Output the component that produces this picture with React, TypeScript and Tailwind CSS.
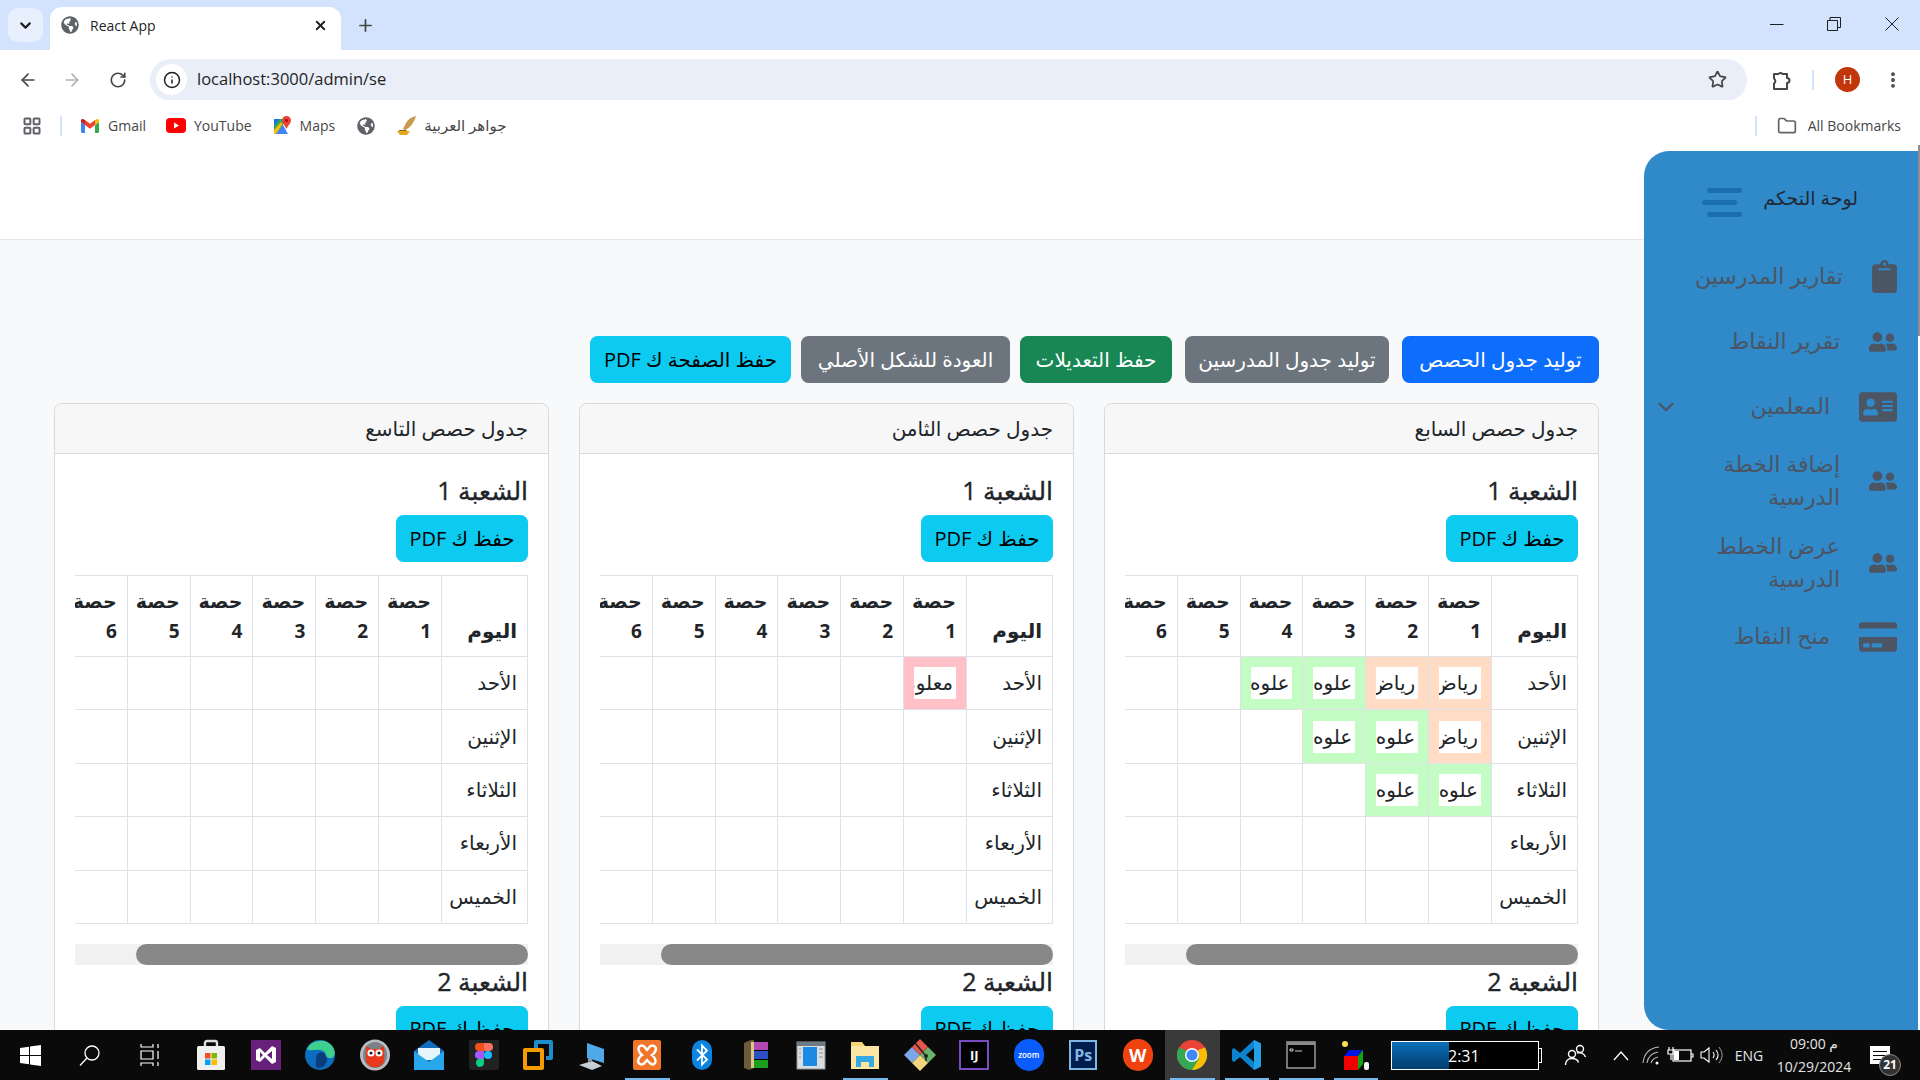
import React from 'react';
import { FaAddressCard, FaClipboard, FaCreditCard, FaGlobeAmericas, FaUserFriends } from 'react-icons/fa';
import { ArrowLeft, ArrowRight, ChevronDown, EllipsisVertical, Folder, Info, LayoutGrid, Plus, RotateCw, Star, X } from 'lucide-react';

const uiFont = "font-['Open_Sans','DejaVu_Sans',sans-serif]";

type Cell = { text: string; tone: 'green' | 'peach' | 'pink' };

const days = ['الأحد', 'الإثنين', 'الثلاثاء', 'الأربعاء', 'الخميس'];
const periods = [1, 2, 3, 4, 5, 6, 7];

const green = (text = 'علوه'): Cell => ({ text, tone: 'green' });
const peach = (text = 'رياض'): Cell => ({ text, tone: 'peach' });

const grades: { title: string; cells: Record<string, Cell> }[] = [
  {
    title: 'جدول حصص السابع',
    cells: {
      '0-0': peach(),
      '0-1': peach(),
      '0-2': green(),
      '0-3': green(),
      '1-0': peach(),
      '1-1': green(),
      '1-2': green(),
      '2-0': green(),
      '2-1': green(),
    },
  },
  { title: 'جدول حصص الثامن', cells: { '0-0': { text: 'معلومات', tone: 'pink' } } },
  { title: 'جدول حصص التاسع', cells: {} },
];

const toneClass = {
  green: 'bg-[#c3fdc3]',
  peach: 'bg-[#ffdcc3]',
  pink: 'bg-[#ffc0c8]',
};

const ScheduleTable = ({ cells }: { cells: Record<string, Cell> }) => (
  <div>
    <div className="overflow-hidden">
      <table className="mb-[20px] w-[527px] table-fixed border-collapse text-[20px] text-[#212529]">
        <thead>
          <tr className="h-[81px]">
            <th className="w-[86px] border border-[#dee2e6] p-[10px] align-bottom text-right leading-[30px] font-bold">اليوم</th>
            {periods.map((p) => (
              <th key={p} className="border border-[#dee2e6] px-[10px] py-[10px] align-bottom text-right text-[19px] leading-[30px] font-bold">
                حصة {p}
              </th>
            ))}
          </tr>
        </thead>
        <tbody>
          {days.map((day, d) => (
            <tr key={day} className="h-[53.4px]">
              <td className="border border-[#dee2e6] p-[10px] text-right whitespace-nowrap">{day}</td>
              {periods.map((p, i) => {
                const cell = cells[`${d}-${i}`];
                return (
                  <td key={p} className={`border border-[#dee2e6] p-[10px] ${cell ? toneClass[cell.tone] : ''}`}>
                    {cell && (
                      <div className="h-[32px] overflow-hidden bg-white pr-[3px] text-right leading-[32px] whitespace-nowrap">{cell.text}</div>
                    )}
                  </td>
                );
              })}
            </tr>
          ))}
        </tbody>
      </table>
    </div>
    {/* scrollbar */}
    <div className="h-[21px] bg-[#f1f1f1]">
      <div className="h-full w-[392px] rounded-[11px] bg-[#888888]" />
    </div>
  </div>
);

const Section = ({ n, cells }: { n: number; cells: Record<string, Cell> }) => (
  <div>
    <h4 className="mb-[9px] text-[25px] leading-[32px] font-normal text-[#212529] [-webkit-text-stroke:0.35px_#212529]">الشعبة {n}</h4>
    <button className="mb-[13px] block h-[47px] w-[132px] rounded-[7.5px] bg-[#0dcaf0] text-[20px] text-black">حفظ ك PDF</button>
    <ScheduleTable cells={cells} />
  </div>
);

const topButtons = [
  { label: 'توليد جدول الحصص', cls: 'w-[197px] bg-[#0d6efd] text-white ml-[13px]' },
  { label: 'توليد جدول المدرسين', cls: 'w-[204px] bg-[#6c757d] text-white ml-[13px]' },
  { label: 'حفظ التعديلات', cls: 'w-[152px] bg-[#198754] text-white ml-[10px]' },
  { label: 'العودة للشكل الأصلي', cls: 'w-[209px] bg-[#6c757d] text-white ml-[10px]' },
  { label: 'حفظ الصفحة ك PDF', cls: 'w-[201px] bg-[#0dcaf0] text-black' },
];

const sideItems = [
  { label: 'تقارير المدرسين', icon: <FaClipboard className="h-[33px] w-[25px]" />, h: 'h-[65px]' },
  { label: 'تقرير النقاط', icon: <FaUserFriends size={28} />, h: 'h-[65px]' },
  { label: 'المعلمين', icon: <FaAddressCard size={38} />, h: 'h-[65px]', chevron: true },
  { label: 'إضافة الخطة الدرسية', icon: <FaUserFriends size={28} />, h: 'h-[84px]' },
  { label: 'عرض الخطط الدرسية', icon: <FaUserFriends size={28} />, h: 'h-[80px]' },
  { label: 'منح النقاط', icon: <FaCreditCard size={38} />, h: 'h-[68px]' },
];

const Sidebar = () => (
  <aside dir="rtl" className="relative z-10 -mt-[89px] flex w-[274px] shrink-0 flex-col rounded-l-[25px] bg-[#3089c9] text-[22px] leading-[32.5px] text-[#4b5563]">
    <div className="flex h-[93px] items-center gap-[21px] pr-[60px]">
      <span className="pt-[2px] text-[19px] text-[#1f2937]">لوحة التحكم</span>
      <span className="mt-[10px] flex w-[40px] flex-col gap-[7px]">
        <i className="ml-[5px] block h-[5px] w-[35px] rounded-full bg-[#1c6fae]" />
        <i className="block h-[5px] w-[35px] self-end rounded-full bg-[#1c6fae]" />
        <i className="ml-[5px] block h-[5px] w-[35px] rounded-full bg-[#1c6fae]" />
      </span>
    </div>
    {sideItems.map((item) => (
      <div key={item.label} className={`flex shrink-0 items-center gap-[29px] pr-[21px] pl-[9px] ${item.h}`}>
        <span className="flex shrink-0 items-center">{item.icon}</span>
        <span className="max-w-[150px] pb-[3px] text-right">{item.label}</span>
        {item.chevron && <ChevronDown size={26} strokeWidth={2.2} className="mr-auto" />}
      </div>
    ))}
  </aside>
);

const GmailIcon = () => (
  <svg width="18" height="14" viewBox="0 0 18 14">
    <path d="M0 3v9.500A1.500 1.500 0 0 0 1.500 14H4V6z" fill="#4285f4" />
    <path d="M14 14h2.500A1.500 1.500 0 0 0 18 12.500V3l-4 3z" fill="#34a853" />
    <path d="M14 1v5l4-3V1.500C18 .2 16.500-.5 15.500.3z" fill="#fbbc04" />
    <path d="M4 6V1l5 3.800L14 1v5l-5 3.700z" fill="#ea4335" />
    <path d="M0 1.500V3l4 3V1L2.500.3C1.500-.5 0 .2 0 1.500z" fill="#c5221f" />
  </svg>
);

const YoutubeIcon = () => (
  <svg width="20" height="15" viewBox="0 0 20 15">
    <rect width="20" height="15" rx="4" fill="#ff0000" />
    <path d="M8 4.500v6l5-3z" fill="#fff" />
  </svg>
);

const MapsIcon = () => (
  <svg width="18" height="19" viewBox="0 0 18 19">
    <path d="M1 3h9v15H1z" fill="#34a853" />
    <path d="M1 18 10 9l5 9z" fill="#4285f4" />
    <path d="M1 3h6L1 10z" fill="#1a73e8" />
    <path d="M1 14 8 6l1.500 2L3 18H1z" fill="#fbbc04" />
    <path d="M13.500 0a4.500 4.500 0 0 1 4.500 4.500c0 3-3 5-4.500 8.500C12 9.500 9 7.500 9 4.500A4.500 4.500 0 0 1 13.500 0z" fill="#ea4335" />
    <circle cx="13.500" cy="4.500" r="1.600" fill="#a50e0e" />
  </svg>
);

const QuillIcon = () => (
  <svg width="21" height="20" viewBox="0 0 21 20">
    <path d="M20 0c-5 1-9 4-11 9l-2 4 2 1c5-2 9-7 11-14z" fill="#c99a4b" />
    <path d="M1 15h13l-3 4H4z" fill="#e2a91f" />
    <path d="M3 14h8l-1 1H3z" fill="#8a6414" />
  </svg>
);

const ExtensionIcon = () => (
  <svg width="22" height="22" viewBox="0 0 22 22" fill="none" stroke="#444746" strokeWidth="2" className="ml-[23px]">
    <path d="M4 5h4.500a2.500 2.500 0 0 1 4 0H17v4a2.500 2.500 0 0 1 0 5v6H4v-5.500a3 3 0 0 0 0-5z" strokeLinejoin="round" />
  </svg>
);

const TabStrip = () => (
  <div className="flex h-[50px] items-end bg-[#d3e3fd]">
    <div className="mb-[8px] ml-[8px] flex h-[34px] w-[35px] items-center justify-center rounded-[10px] bg-[#e9f0fd]">
      <ChevronDown size={17} strokeWidth={3} className="text-[#1f1f1f]" />
    </div>
    <div className="ml-[7px] flex h-[43px] w-[291px] items-center rounded-t-[12px] bg-white pr-[13px] pb-[7px] pl-[11px]">
      <FaGlobeAmericas size={18} className="text-[#5f6368]" />
      <span className={`ml-[11px] flex-1 text-[14px] text-[#1f1f1f] ${uiFont}`}>React App</span>
      <X size={15} strokeWidth={3} className="text-[#1f1f1f]" />
    </div>
    <div className="mb-[8px] ml-[15px] flex h-[34px] items-center">
      <Plus size={19} strokeWidth={2.2} className="text-[#444746]" />
    </div>
    <div className="ml-auto flex h-full items-start pt-[17px] text-[#1f1f1f]">
      <svg width="14" height="14" viewBox="0 0 14 14" className="mr-[43px]"><path d="M0 7.500h13.500" stroke="currentColor" fill="none" /></svg>
      <svg width="14" height="14" viewBox="0 0 14 14" className="mr-[44px]"><path d="M.5 3.500h10v10H.5zM3 3.500V.5h10.500v10h-3" stroke="currentColor" fill="none" /></svg>
      <svg width="14" height="14" viewBox="0 0 14 14" className="mr-[21px]"><path d="M.5.500l13 13M13.500.500l-13 13" stroke="currentColor" fill="none" /></svg>
    </div>
  </div>
);

const Toolbar = () => (
  <div className="flex h-[50px] items-center rounded-t-[10px] bg-white pt-[9px]">
    <div className="flex w-[150px] items-center text-[#444746]">
      <ArrowLeft size={20} strokeWidth={2} className="ml-[18px]" />
      <ArrowRight size={20} strokeWidth={2} className="ml-[24px] text-[#b0b1b2]" />
      <RotateCw size={18} strokeWidth={2.2} className="ml-[27px]" />
    </div>
    <div className="flex h-[42px] w-[1597px] items-center rounded-full bg-[#e9eef8] pr-[20px] pl-[6px]">
      <span className="flex h-[31px] w-[31px] items-center justify-center rounded-full bg-white">
        <Info size={18} strokeWidth={2} className="text-[#1f1f1f]" />
      </span>
      <span className={`ml-[10px] flex-1 text-[16.5px] text-[#1f1f1f] ${uiFont}`}>localhost:3000/admin/se</span>
      <Star size={19} strokeWidth={2.2} className="text-[#444746]" />
    </div>
    <ExtensionIcon />
    <span className="ml-[20px] h-[20px] w-[2px] bg-[#d3e3fd]" />
    <span className={`ml-[21px] flex h-[25px] w-[25px] items-center justify-center rounded-full bg-[#c1360b] text-[13px] text-white ${uiFont}`}>H</span>
    <EllipsisVertical size={20} strokeWidth={2.6} className="ml-[23px] text-[#444746]" />
  </div>
);

const BookmarkBar = () => (
  <div className={`flex h-[45px] items-center bg-white pt-[6px] text-[14px] text-[#474747] ${uiFont}`}>
    <LayoutGrid size={20} strokeWidth={2.4} className="ml-[22px] text-[#5f6368]" />
    <span className="mr-[19px] ml-[18px] h-[20px] w-[2px] bg-[#d3e3fd]" />
    <GmailIcon />
    <span className="ml-[9px]">Gmail</span>
    <span className="ml-[20px]"><YoutubeIcon /></span>
    <span className="ml-[8px]">YouTube</span>
    <span className="ml-[21px]"><MapsIcon /></span>
    <span className="ml-[9px]">Maps</span>
    <FaGlobeAmericas size={18} className="ml-[22px] text-[#5f6368]" />
    <span className="ml-[21px]"><QuillIcon /></span>
    <span className="ml-[7px] text-[15px]">جواهر العربية</span>
    <span className="ml-auto h-[20px] w-[2px] bg-[#d3e3fd]" />
    <Folder size={20} strokeWidth={2} className="ml-[20px] text-[#5f6368]" />
    <span className="mr-[19px] ml-[11px] text-[14px]">All Bookmarks</span>
  </div>
);

const Ic = ({ children }: { children: React.ReactNode }) => (
  <svg width="32" height="32" viewBox="0 0 32 32">{children}</svg>
);

const TextTile = ({ className, children }: { className: string; children: React.ReactNode }) => (
  <span className={`flex items-center justify-center ${uiFont} ${className}`}>{children}</span>
);

const dockIcons: { key: string; node: React.ReactNode; open?: boolean; active?: boolean }[] = [
  {
    key: 'store',
    node: (
      <Ic>
        <path d="M10 7V4a2 2 0 0 1 2-2h8a2 2 0 0 1 2 2v3" stroke="#ddd" strokeWidth="2.400" fill="none" />
        <rect x="2" y="7" width="28" height="24" rx="1.500" fill="#f0f0f0" />
        <rect x="10" y="14" width="5.500" height="5.500" fill="#f25022" />
        <rect x="16.500" y="14" width="5.500" height="5.500" fill="#7fba00" />
        <rect x="10" y="20.500" width="5.500" height="5.500" fill="#00a4ef" />
        <rect x="16.500" y="20.500" width="5.500" height="5.500" fill="#ffb900" />
      </Ic>
    ),
  },
  {
    key: 'vs',
    node: (
      <Ic>
        <rect x="1" y="1" width="30" height="30" fill="#68217a" />
        <path d="M6 11l4-2 5 5 7-7 4 2v14l-4 2-7-7-5 5-4-2zM10 13v6l3-3zM22 12l-5 4 5 4z" fill="#fff" fillRule="evenodd" />
      </Ic>
    ),
  },
  {
    key: 'edge',
    node: (
      <Ic>
        <circle cx="16" cy="16" r="15" fill="#0c6dbf" />
        <path d="M3 10C7 0 25-2 30 10c2 5 0 10-5 9-4-1-2-5-6-7-6-3-13 1-16-2z" fill="#3ecf8e" />
        <path d="M12 20c0-5 4-8 8-6 2 1 0 3 3 5 1 3-3 11-9 10-3-1-2-5-2-9z" fill="#0a3d7d" />
      </Ic>
    ),
  },
  {
    key: 'owl',
    node: (
      <Ic>
        <ellipse cx="16" cy="16" rx="15" ry="15.500" fill="#b9bdc2" />
        <ellipse cx="16" cy="16" rx="12" ry="13" fill="#7c8187" />
        <path d="M7 7l5 3h8l5-3v16l-5 5h-8l-5-5z" fill="#e8391d" />
        <circle cx="12" cy="14" r="3.500" fill="#fff" />
        <circle cx="20" cy="14" r="3.500" fill="#fff" />
        <circle cx="12" cy="14" r="1.600" fill="#222" />
        <circle cx="20" cy="14" r="1.600" fill="#222" />
      </Ic>
    ),
  },
  {
    key: 'mail',
    node: (
      <Ic>
        <path d="M1 12 16 1l15 11v19H1z" fill="#0f6cbd" />
        <path d="M5 9h22v12H5z" fill="#e8f4fc" />
        <path d="M1 12l15 11 15-11v19H1z" fill="#28a8ea" />
      </Ic>
    ),
  },
  {
    key: 'figma',
    node: (
      <Ic>
        <rect x="1" y="1" width="30" height="30" rx="2" fill="#222222" />
        <path d="M11 4h5v8h-5a4 4 0 0 1 0-8z" fill="#f24e1e" />
        <path d="M16 4h5a4 4 0 0 1 0 8h-5z" fill="#ff7262" />
        <path d="M11 12h5v8h-5a4 4 0 0 1 0-8z" fill="#a259ff" />
        <circle cx="20" cy="16" r="4" fill="#1abcfe" />
        <path d="M11 20h5v4a4 4 0 1 1-5-4z" fill="#0acf83" />
      </Ic>
    ),
  },
  {
    key: 'vmware',
    node: (
      <Ic>
        <path d="M14 1h15a2 2 0 0 1 2 2v16a2 2 0 0 1-2 2h-5v-4h3V5H16v4h-4V3a2 2 0 0 1 2-2z" fill="#1d8ecb" />
        <path d="M3 9h17a2 2 0 0 1 2 2v18a2 2 0 0 1-2 2H3a2 2 0 0 1-2-2V11a2 2 0 0 1 2-2zm2 4v14h13V13z" fill="#f59c00" fillRule="evenodd" />
      </Ic>
    ),
  },
  {
    key: 'pc',
    node: (
      <Ic>
        <path d="M10 4l17 6v14l-17-5z" fill="#4fa8e8" />
        <path d="M2 26l13-4 10 5-10 4z" fill="#c7ced4" />
        <path d="M11 19l4 1v2l-4 1z" fill="#8d99a3" />
      </Ic>
    ),
  },
  {
    key: 'xampp',
    open: true,
    node: (
      <Ic>
        <rect x="2" y="1" width="28" height="30" rx="2" fill="#f1762a" />
        <path d="M9 7c4-2 5 2 7 4 2-2 3-6 7-4s1 7-2 9c3 2 5 7 2 9s-5-2-7-4c-2 2-3 6-7 4s-1-7 2-9c-3-2-5-7-2-9z" fill="none" stroke="#fff" strokeWidth="2.400" />
      </Ic>
    ),
  },
  {
    key: 'bluetooth',
    node: (
      <Ic>
        <rect x="6" y="1" width="20" height="30" rx="10" fill="#0a84e0" />
        <path d="M11 10.500l10 10-5 5v-19l5 5-10 10" fill="none" stroke="#fff" strokeWidth="1.800" />
      </Ic>
    ),
  },
  {
    key: 'rar',
    node: (
      <Ic>
        <rect x="6" y="3" width="22" height="8" fill="#b04ab0" />
        <rect x="6" y="12" width="22" height="8" fill="#2d4fc4" />
        <rect x="6" y="21" width="22" height="8" fill="#1aa01a" />
        <path d="M4 4l7-3h3v28l-5 2-5-2z" fill="#6b5a3c" />
        <rect x="11" y="3" width="3" height="26" fill="#d9c48a" />
      </Ic>
    ),
  },
  {
    key: 'window',
    node: (
      <Ic>
        <rect x="2" y="3" width="28" height="27" fill="#d9dde0" stroke="#8f979d" />
        <rect x="2" y="3" width="28" height="4" fill="#6f7a82" />
        <rect x="8" y="8" width="14" height="19" fill="#1e88e5" />
        <path d="M24 10h4M24 14h4M24 18h4M4 10h2M4 14h2M4 18h2" stroke="#8f979d" />
      </Ic>
    ),
  },
  {
    key: 'files',
    open: true,
    node: (
      <Ic>
        <path d="M2 3h11l3 4h14v23H2z" fill="#f6d57a" />
        <path d="M2 7h28v23H2z" fill="#fbe7a3" />
        <path d="M7 28V17h18v11h-5v-5h-8v5z" fill="#35a9e1" />
      </Ic>
    ),
  },
  {
    key: 'git',
    node: (
      <Ic>
        <path d="M8 8l8 8-8 8-8-8z" fill="#7aa7e8" />
        <path d="M24 8l8 8-8 8-8-8z" fill="#6bb56b" />
        <path d="M16 16l8 8-8 8-8-8z" fill="#f2d57e" />
        <path d="M16 0l8 8-8 8-8-8z" fill="#e2574c" />
        <path d="M11 4l11 13v5" stroke="#222" strokeWidth="1.500" fill="none" />
        <circle cx="22" cy="17" r="2" fill="#222" />
      </Ic>
    ),
  },
  {
    key: 'idea',
    node: (
      <TextTile className="h-[30px] w-[30px] border-2 border-[#7b4bc4] bg-black text-[13px] leading-[13px] font-bold text-white">IJ</TextTile>
    ),
  },
  {
    key: 'zoom',
    node: (
      <TextTile className="h-[32px] w-[30px] rounded-full bg-[#0b5cff] text-[8px] font-semibold text-white">zoom</TextTile>
    ),
  },
  {
    key: 'ps',
    node: (
      <TextTile className="h-[30px] w-[28px] border-2 border-[#7fb6e6] bg-[#001d4d] text-[16px] font-bold text-[#7fb6e6]">Ps</TextTile>
    ),
  },
  {
    key: 'wps',
    node: (
      <TextTile className="h-[32px] w-[30px] rounded-full bg-[#f0420f] text-[18px] font-bold text-white">W</TextTile>
    ),
  },
  {
    key: 'chrome',
    open: true,
    active: true,
    node: (
      <Ic>
        <circle cx="16" cy="16" r="15" fill="#ea4335" />
        <path d="M16 16 3 23.500A15 15 0 0 1 3 8.500L9 11z" fill="#34a853" />
        <path d="M16 31A15 15 0 0 1 3 23.500l7-11 6 3.500 13 -7.500A15 15 0 0 1 16 31z" fill="#34a853" />
        <path d="M29 8.500A15 15 0 0 1 16 31l7-11.500-1-8.500z" fill="#fbbc04" />
        <circle cx="16" cy="16" r="7" fill="#fff" />
        <circle cx="16" cy="16" r="5.500" fill="#4285f4" />
      </Ic>
    ),
  },
  {
    key: 'vscode',
    open: true,
    node: (
      <Ic>
        <path d="M23 1l7 3.500v23L23 31 9 18l-6 5-2-1.500v-11L3 9l6 5z" fill="#0a84d0" />
        <path d="M23 9v14l-8-7z" fill="#0a0a0a" />
        <path d="M23 1l7 3.500v23L23 31z" fill="#24a2e8" />
      </Ic>
    ),
  },
  {
    key: 'terminal',
    open: true,
    node: (
      <Ic>
        <rect x="2" y="3" width="28" height="26" fill="#050505" stroke="#9a9a9a" strokeWidth="1.500" />
        <rect x="2" y="3" width="28" height="3" fill="#8a8a8a" />
        <path d="M5 10h3v2H5zM10 12h7" stroke="#ccc" />
      </Ic>
    ),
  },
  {
    key: 'paint',
    open: true,
    node: (
      <Ic>
        <circle cx="5" cy="5" r="3" fill="#ffe14d" />
        <rect x="4" y="17" width="14" height="14" fill="#f00000" />
        <path d="M4 17l5-6h14l-5 6z" fill="#0015e0" />
        <path d="M18 17l5-6v14l-5 6z" fill="#0fa30f" />
        <rect x="24" y="23" width="5" height="8" rx="2" fill="#f4f4f4" />
      </Ic>
    ),
  },
];

const DockSlot = ({ node, open, active }: { node: React.ReactNode; open?: boolean; active?: boolean }) => (
  <div className={`relative flex h-full w-[54.5px] items-center justify-center ${active ? 'bg-[#3a3a3a]' : ''}`}>
    {node}
    {open && <span className="absolute right-[5px] bottom-0 left-[5px] h-[2px] bg-[#76b9ed]" />}
  </div>
);

const Taskbar = () => (
  <div className={`flex h-[50px] shrink-0 items-center bg-[#0a0a0a] text-white ${uiFont}`}>
    <div className="flex h-full w-[60px] items-center justify-center">
      <svg width="21" height="21" viewBox="0 0 21 21" fill="#fff">
        <path d="M0 3l9-1.300V10H0zM10 1.500 21 0v10H10zM0 11h9v8.300L0 18zM10 11h11v10l-11-1.500z" />
      </svg>
    </div>
    <div className="flex h-full w-[59px] items-center justify-center">
      <svg width="21" height="21" viewBox="0 0 21 21" fill="none" stroke="#fff" strokeWidth="1.300">
        <circle cx="13" cy="8" r="7" />
        <path d="M8 13 1 20.500" />
      </svg>
    </div>
    <div className="flex h-full w-[61px] items-center justify-center">
      <svg width="20" height="22" viewBox="0 0 20 22" fill="none" stroke="#fff" strokeWidth="1.200">
        <path d="M1 0v3h12V0M1 22v-3h12v3M1 7h12v8H1zM18 0v4M18 7v8M18 18v4" />
      </svg>
    </div>
    <div className="flex h-full pl-[4px]">
      {dockIcons.map((icon) => (
        <DockSlot key={icon.key} node={icon.node} open={icon.open} active={icon.active} />
      ))}
    </div>
    <div className="relative ml-[8px] h-[29px] w-[148px] border border-white bg-black">
      <div className="h-full w-[57px] bg-gradient-to-b from-[#0a6fb8] to-[#033d6e]" />
      <span className="absolute top-[2px] left-[56px] text-[16px] leading-[24px]">2:31</span>
      <span className="absolute top-[6px] -right-[4px] h-[15px] w-[3px] border border-l-0 border-white" />
    </div>
    <svg width="24" height="22" viewBox="0 0 24 22" fill="none" stroke="#fff" strokeWidth="1.400" className="ml-[25px]">
      <circle cx="8" cy="10" r="3.500" />
      <path d="M1.500 21c0-4 2.500-6.500 6.500-6.500s6 2 6.500 4" />
      <circle cx="16" cy="5" r="3.500" />
      <path d="M13 9c3-1 7 0 8.500 4" />
    </svg>
    <svg width="24" height="12" viewBox="0 0 24 12" fill="none" stroke="#fff" strokeWidth="1.300" className="ml-[21px]">
      <path d="M5 11l7-8 7 8" />
    </svg>
    <svg width="30" height="22" viewBox="0 0 30 22" fill="none" stroke="#bbb" strokeWidth="1.100" className="ml-[4px]">
      <path d="M6 19C7 9 13 4 22 3M10 19c1-6 5-10 11-11M14 19c1-3 3-5 7-6" />
      <circle cx="20" cy="19" r="1.500" fill="#fff" stroke="none" />
    </svg>
    <svg width="28" height="18" viewBox="0 0 28 18" fill="none" stroke="#fff" strokeWidth="1.200">
      <rect x="6" y="4" width="18" height="11" />
      <rect x="7" y="5" width="5" height="9" fill="#fff" stroke="none" />
      <path d="M24 8h2v3h-2M2 1v3M6 1v3M1 4h6v4H1zM4 8v6" />
    </svg>
    <svg width="32" height="20" viewBox="0 0 32 20" fill="none" stroke="#fff" strokeWidth="1.100">
      <path d="M6 7h3l5-4v14l-5-4H6zM18 7c1.500 2 1.500 4 0 6M21 5c2.500 3 2.500 7 0 10" />
      <path d="M24 2c4 5 4 11 0 16" stroke="#888" />
    </svg>
    <span className="w-[44px] text-center text-[14px] text-[#e5e5e5]">ENG</span>
    <div className="flex w-[86px] flex-col items-center text-[14px] leading-[23px] whitespace-nowrap text-[#e5e5e5]">
      <span>09:00 م</span>
      <span>10/29/2024</span>
    </div>
    <div className="relative flex h-full w-[60px] items-center">
      <span className="ml-[13px] flex h-[18px] w-[20px] flex-col justify-center gap-[3px] bg-white px-[3px]">
        <i className="block h-[1px] bg-black" />
        <i className="block h-[1px] bg-black" />
        <i className="block h-[1px] bg-black" />
      </span>
      <span className="absolute top-[24px] left-[22px] flex h-[22px] w-[22px] items-center justify-center rounded-full border border-[#888] bg-[#333] text-[12px] font-bold">21</span>
    </div>
  </div>
);

export default function App() {
  return (
    <div className="flex h-screen flex-col overflow-hidden bg-white">
      <TabStrip />
      <Toolbar />
      <BookmarkBar />
      <div className={`flex min-h-0 flex-1 flex-col bg-[#f8f9fa] ${uiFont}`}>
        <div className="h-[95px] shrink-0 border-b border-[#e6e6e6] bg-white" />
        <div className="flex min-h-0 flex-1">
          <main dir="rtl" className="min-w-0 flex-1 overflow-hidden pt-[96px] pr-[45px] pl-[54px] text-[#212529]">
            <div className="mb-[20px] flex">
              {topButtons.map((b) => (
                <button key={b.label} className={`h-[47px] shrink-0 rounded-[7.5px] text-[20px] whitespace-nowrap ${b.cls}`}>
                  {b.label}
                </button>
              ))}
            </div>
            <div className="grid grid-cols-3 gap-[30px]">
              {grades.map((g) => (
                <div key={g.title} className="rounded-[8px] border border-[#d9d9d9] bg-white">
                  <div className="flex h-[50px] items-center rounded-t-[8px] border-b border-[#d9d9d9] bg-[#f7f7f7] px-[20px] text-[20px]">{g.title}</div>
                  <div className="p-[20px]">
                    <Section n={1} cells={g.cells} />
                    <Section n={2} cells={{}} />
                  </div>
                </div>
              ))}
            </div>
          </main>
          <Sidebar />
          <div className="relative z-10 -mt-[95px] w-[2px] shrink-0 bg-white">
            <div className="h-[191px] bg-[#8f8f8f]" />
          </div>
        </div>
      </div>
      <Taskbar />
    </div>
  );
}
